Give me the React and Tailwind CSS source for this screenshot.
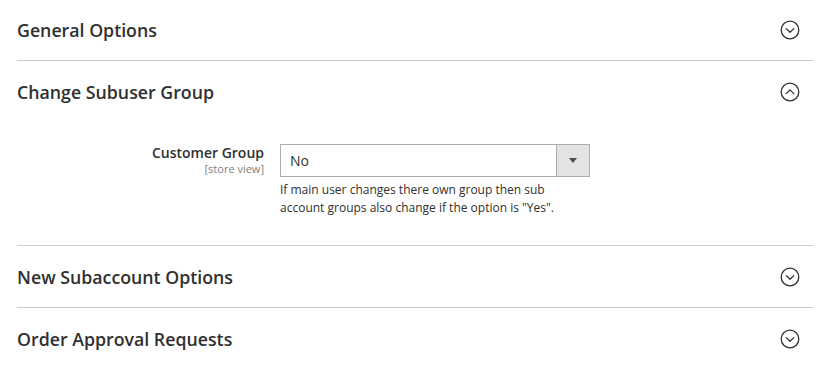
import React from 'react'

function CircleChevron({ up }) {
  return (
    <svg width="20" height="20" viewBox="0 0 20 20" fill="none" stroke="#303030" strokeWidth="1.3">
      <circle cx="10" cy="10" r="8.8" />
      {up
        ? <path d="M6.2 11.6 L10 7.9 L13.8 11.6" strokeLinecap="round" strokeLinejoin="round" />
        : <path d="M6.2 8.6 L10 12.3 L13.8 8.6" strokeLinecap="round" strokeLinejoin="round" />}
    </svg>
  )
}

function SectionHeader({ title, open }) {
  return (
    <div className="flex h-[61px] items-center justify-between pr-[13px]">
      <h2 className="text-[17.75px] font-semibold leading-[22px] text-[#303030]">{title}</h2>
      <CircleChevron up={open} />
    </div>
  )
}

export default function App() {
  return (
    <div className="w-[827px] h-[372px] overflow-hidden bg-white pl-[17px] pr-[14px]" style={{ fontFamily: '"Open Sans", sans-serif' }}>
      <div className="-mt-[1px] border-b border-[#cccccc]">
        <SectionHeader title="General Options" />
      </div>

      <div className="border-b border-[#cccccc]">
        <SectionHeader title="Change Subuser Group" open />
        <div className="flex pt-[22px] pb-[28px]">
          <div className="w-[247px] text-right">
            <div className="text-[14px] font-semibold leading-[18px] text-[#303030]">Customer Group</div>
            <div className="text-[11px] leading-[14px] text-[#808080]">[store view]</div>
          </div>
          <div className="ml-[16px]">
            <div className="flex w-[310px] h-[33px] border border-[#adadad] bg-white">
              <div className="flex-1 flex items-center pl-[9px] text-[14px] text-[#303030]">No</div>
              <div className="w-[33px] border-l border-[#adadad] bg-[#e3e3e3] flex items-center justify-center">
                <svg width="8" height="5" viewBox="0 0 8 5"><path d="M0 0 H8 L4 5 Z" fill="#514943" /></svg>
              </div>
            </div>
            <p className="mt-[4px] text-[12px] leading-[18px] text-[#303030] w-[290px]">
              If main user changes there own group then sub account groups also change if the option is "Yes".
            </p>
          </div>
        </div>
      </div>

      <div className="border-b border-[#cccccc]">
        <SectionHeader title="New Subaccount Options" />
      </div>

      <div>
        <SectionHeader title="Order Approval Requests" />
      </div>
    </div>
  )
}
